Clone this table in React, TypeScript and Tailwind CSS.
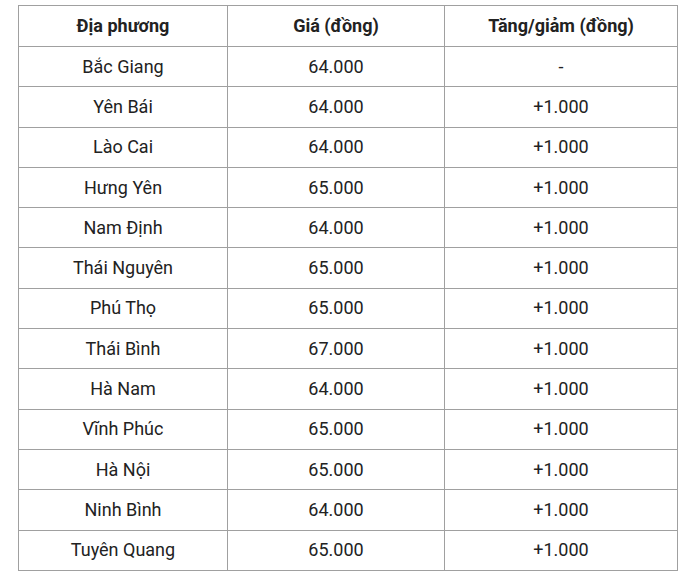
import React from 'react';

interface Row {
  place: string;
  price: string;
  change: string;
}

const rows: Row[] = [
  { place: 'Bắc Giang', price: '64.000', change: '-' },
  { place: 'Yên Bái', price: '64.000', change: '+1.000' },
  { place: 'Lào Cai', price: '64.000', change: '+1.000' },
  { place: 'Hưng Yên', price: '65.000', change: '+1.000' },
  { place: 'Nam Định', price: '64.000', change: '+1.000' },
  { place: 'Thái Nguyên', price: '65.000', change: '+1.000' },
  { place: 'Phú Thọ', price: '65.000', change: '+1.000' },
  { place: 'Thái Bình', price: '67.000', change: '+1.000' },
  { place: 'Hà Nam', price: '64.000', change: '+1.000' },
  { place: 'Vĩnh Phúc', price: '65.000', change: '+1.000' },
  { place: 'Hà Nội', price: '65.000', change: '+1.000' },
  { place: 'Ninh Bình', price: '64.000', change: '+1.000' },
  { place: 'Tuyên Quang', price: '65.000', change: '+1.000' },
];

const App: React.FC = () => {
  return <div className="bg-white w-[691px] h-[576px] pt-[5px] pl-[18px] font-['Roboto',sans-serif] text-[#222222]">
      <table className="border-collapse w-[660px] text-[18px] leading-[22px] text-center">
        <thead>
          <tr className="h-[41px]">
            <th className="border border-[#a0a0a0] w-[209px] font-bold">Địa phương</th>
            <th className="border border-[#a0a0a0] w-[217px] font-bold">Giá (đồng)</th>
            <th className="border border-[#a0a0a0] font-bold">Tăng/giảm (đồng)</th>
          </tr>
        </thead>
        <tbody>
          {rows.map(row => <tr key={row.place} className="h-[40.3px]">
              <td className="border border-[#a0a0a0]">{row.place}</td>
              <td className="border border-[#a0a0a0]">{row.price}</td>
              <td className="border border-[#a0a0a0]">{row.change}</td>
            </tr>)}
        </tbody>
      </table>
    </div>;
};

export default App;
